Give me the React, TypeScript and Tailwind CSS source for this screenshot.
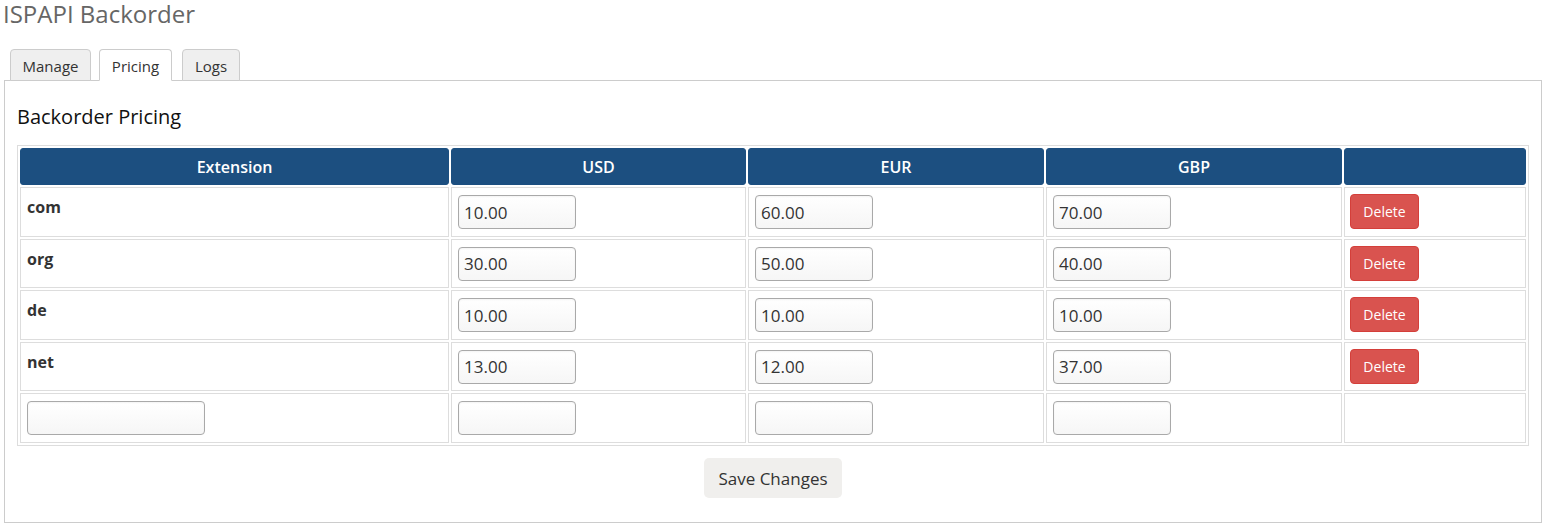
import React from "react";

const rows = [
  { ext: "com", usd: "10.00", eur: "60.00", gbp: "70.00" },
  { ext: "org", usd: "30.00", eur: "50.00", gbp: "40.00" },
  { ext: "de", usd: "10.00", eur: "10.00", gbp: "10.00" },
  { ext: "net", usd: "13.00", eur: "12.00", gbp: "37.00" },
];

function PriceInput({ value, wide }: { value: string; wide?: boolean }) {
  return (
    <input
      type="text"
      defaultValue={value}
      className={
        (wide ? "w-[178px] " : "w-[118px] ") +
        "h-[34px] rounded-[4px] border border-[#a9a9a9] bg-gradient-to-b from-[#ffffff] to-[#f6f6f6] px-[5px] text-[17px] text-[#333] shadow-[inset_0_1px_2px_rgba(0,0,0,0.05)] outline-none align-top"
      }
    />
  );
}

const cell = "border border-[#dddddd] px-[6px] pt-[7px] align-top h-[49.5px]";
const th =
  "h-[37px] p-0 rounded-[3px] border border-[#1c4f80] bg-[#1c4f80] text-white text-[16px] font-semibold text-center align-middle";

export default function App() {
  return (
    <div
      className="w-[1545px] bg-white text-[#333]"
      style={{ fontFamily: '"Open Sans", "Noto Sans", sans-serif' }}
    >
      <div className="pl-[3px] text-[24px] leading-[28px] text-[#666]">ISPAPI Backorder</div>
      <div className="ml-[4px] mt-[21px] w-[1538px]">
        <div className="relative z-10 flex items-end pl-[6px] text-[15px]">
          <div className="-mb-px flex h-[32px] w-[81px] items-center justify-center rounded-t-[4px] border border-[#cccccc] bg-[#efefef] pt-[3px] text-[#333]">
            Manage
          </div>
          <div className="-mb-px ml-[8px] flex h-[32px] w-[73px] items-center justify-center rounded-t-[4px] border border-[#cccccc] border-b-white bg-white pt-[3px] text-[#333]">
            Pricing
          </div>
          <div className="-mb-px ml-[10px] flex h-[32px] w-[58px] items-center justify-center rounded-t-[4px] border border-[#cccccc] bg-[#efefef] pt-[3px] text-[#333]">
            Logs
          </div>
        </div>
        <div className="border border-[#cccccc] px-[12px] pb-[24px] pt-[22px]">
          <h2 className="mb-[14px] text-[20px] leading-[28px] text-[#111]">Backorder Pricing</h2>
          <table className="w-[1512px] table-fixed border-separate border-spacing-[2px] border border-[#dddddd]">
            <colgroup>
              <col className="w-[429px]" />
              <col className="w-[295px]" />
              <col className="w-[296px]" />
              <col className="w-[296px]" />
              <col className="w-[182px]" />
            </colgroup>
            <thead>
              <tr>
                <th className={th}>Extension</th>
                <th className={th}>USD</th>
                <th className={th}>EUR</th>
                <th className={th}>GBP</th>
                <th className={th}></th>
              </tr>
            </thead>
            <tbody>
              {rows.map((r) => (
                <tr key={r.ext}>
                  <td className={cell}>
                    <span className="text-[16px] font-bold leading-[22px] text-[#333]">{r.ext}</span>
                  </td>
                  <td className={cell}>
                    <PriceInput value={r.usd} />
                  </td>
                  <td className={cell}>
                    <PriceInput value={r.eur} />
                  </td>
                  <td className={cell}>
                    <PriceInput value={r.gbp} />
                  </td>
                  <td className="border border-[#dddddd] pl-[5px] pr-[6px] pt-[7px] align-top h-[49.5px]">
                    <button className="-mt-px h-[35px] w-[69px] rounded-[4px] border border-[#d43f3a] bg-[#d9534f] text-[14px] text-white">
                      Delete
                    </button>
                  </td>
                </tr>
              ))}
              <tr>
                <td className={cell}>
                  <PriceInput value="" wide />
                </td>
                <td className={cell}>
                  <PriceInput value="" />
                </td>
                <td className={cell}>
                  <PriceInput value="" />
                </td>
                <td className={cell}>
                  <PriceInput value="" />
                </td>
                <td className={cell}></td>
              </tr>
            </tbody>
          </table>
          <div className="flex justify-center pt-[12px]">
            <button className="h-[40px] w-[138px] rounded-[5px] bg-[#f0efed] pt-[2px] text-[17px] text-[#333]">
              Save Changes
            </button>
          </div>
        </div>
      </div>
    </div>
  );
}
